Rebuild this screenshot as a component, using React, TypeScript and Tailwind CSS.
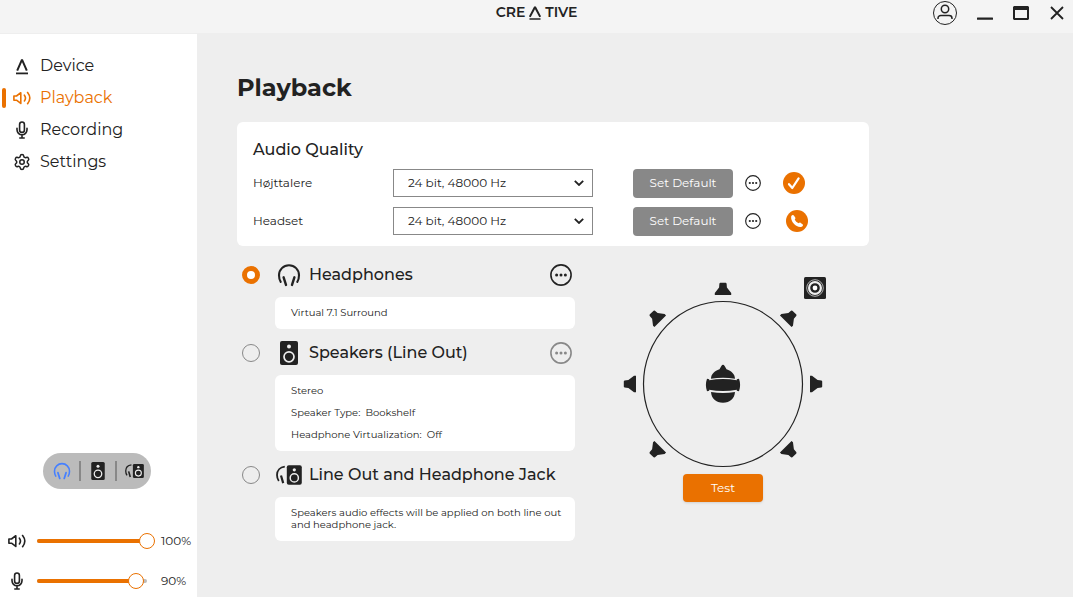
import React, { useState } from 'react';
import { Settings } from 'lucide-react';

type IconProps = { className?: string };

const DeviceIcon: React.FC<IconProps> = ({ className }) => (
  <svg viewBox="0 0 18 18" className={className} fill="none" stroke="currentColor" aria-hidden="true">
    <path d="M4.2 13.6 9 2.6l4.8 11" strokeWidth="2" strokeLinejoin="bevel" />
    <path d="M3 16.4h12" strokeWidth="1.8" />
  </svg>
);

const VolumeIcon: React.FC<IconProps> = ({ className }) => (
  <svg viewBox="0 0 18 18" className={className} fill="none" stroke="currentColor" strokeWidth="1.6" strokeLinejoin="round" strokeLinecap="round" aria-hidden="true">
    <path d="M.9 7v4.2h2.6l4.3 3.2V3.7L3.5 7z" />
    <path d="M11.4 6.2c1.3 1.7 1.3 4 0 5.7M14.6 3.5c2.7 3.4 2.7 7.8 0 11.2" />
  </svg>
);

const MicIcon: React.FC<IconProps> = ({ className }) => (
  <svg viewBox="0 0 18 18" className={className} fill="none" stroke="currentColor" strokeWidth="1.6" strokeLinecap="round" aria-hidden="true">
    <rect x="6.6" y="1" width="4.8" height="10.4" rx="2.4" />
    <path d="M4 7.2v1.6a5 5 0 0 0 10 0V7.2M9 14v2.8M6.8 17h4.4" />
  </svg>
);

const HeadphonesIcon: React.FC<IconProps> = ({ className }) => (
  <svg viewBox="0 0 24 24" className={className} fill="none" stroke="currentColor" strokeWidth="2.1" strokeLinecap="round" aria-hidden="true">
    <path d="M3.7 18.8C2.5 17 2 15 2 12.2a10 10 0 0 1 20 0c0 2.8-.5 4.8-1.7 6.6" />
    <path d="m6.6 14.3 2.4 7.6M17.4 14.3 15 21.9" strokeWidth="2.4" />
  </svg>
);

const SpeakerIcon: React.FC<IconProps> = ({ className }) => (
  <svg viewBox="0 0 18 24" className={className} aria-hidden="true">
    <rect width="18" height="24" rx="2" fill="#222" />
    <circle cx="9" cy="5.6" r="2" fill="#eee" />
    <circle cx="9" cy="15.8" r="5" fill="none" stroke="#eee" strokeWidth="1.7" />
  </svg>
);

const ComboIcon: React.FC<IconProps> = ({ className }) => (
  <svg viewBox="0 0 26 20" className={className} aria-hidden="true">
    <path d="M8.8 1.6C4 2.2 1 5.7 1 10c0 2.3.6 4.3 1.8 6" fill="none" stroke="#222" strokeWidth="1.8" />
    <path d="m5 10.5 2.2 7.6" fill="none" stroke="#222" strokeWidth="2.2" />
    <rect x="10.8" y=".3" width="15" height="19.4" rx="2" fill="#222" />
    <circle cx="18.3" cy="4.8" r="1.6" fill="#eee" />
    <circle cx="18.3" cy="12.9" r="4.1" fill="none" stroke="#eee" strokeWidth="1.5" />
  </svg>
);

const MoreIcon: React.FC<IconProps> = ({ className }) => (
  <svg viewBox="0 0 22 22" className={className} fill="currentColor" aria-hidden="true">
    <circle cx="11" cy="11" r="10.1" fill="none" stroke="currentColor" strokeWidth="1.6" />
    <circle cx="6.6" cy="11" r="1.5" />
    <circle cx="11" cy="11" r="1.5" />
    <circle cx="15.4" cy="11" r="1.5" />
  </svg>
);

const CheckBadge: React.FC = () => (
  <svg viewBox="0 0 22 22" className="ml-[22px] size-[22px]" role="img" aria-label="Default device">
    <circle cx="11" cy="11" r="11" fill="#ea7100" />
    <path d="m6 12.2 3.3 3.8 6.3-9.6" fill="none" stroke="#fff" strokeWidth="2.2" strokeLinecap="round" strokeLinejoin="round" />
  </svg>
);

const PhoneBadge: React.FC = () => (
  <svg viewBox="0 0 22 22" className="ml-[25px] size-[22px]" role="img" aria-label="Default communication device">
    <circle cx="11" cy="11" r="11" fill="#ea7100" />
    <path d="M5.2 6.2C6 4.8 7.2 4.6 7.9 5.5l1.3 1.9c.4.7.2 1.2-.5 1.9.6 1.7 2.2 3.3 4 4 .7-.7 1.3-.9 2-.4l1.8 1.3c.9.7.6 1.9-.8 2.6-4.8 1.4-11.5-5-10.5-10.6z" fill="#fff" />
  </svg>
);

const NAV_ITEMS = [
  { name: 'Device', icon: <DeviceIcon className="size-[18px]" /> },
  { name: 'Playback', icon: <VolumeIcon className="size-[18px]" /> },
  { name: 'Recording', icon: <MicIcon className="size-[18px]" /> },
  { name: 'Settings', icon: <Settings className="size-[18px]" strokeWidth={2} /> },
];

const QUALITY_ROWS = [
  { id: 'speakers', name: 'Højttalere', badge: <CheckBadge /> },
  { id: 'headset', name: 'Headset', badge: <PhoneBadge /> },
];

const OUTPUTS = [
  {
    id: 'headphones',
    name: 'Headphones',
    icon: <HeadphonesIcon className="size-6" />,
    more: 'text-[#222]',
    details: ['Virtual 7.1 Surround'],
  },
  {
    id: 'lineout',
    name: 'Speakers (Line Out)',
    icon: <SpeakerIcon className="h-6 w-[18px]" />,
    more: 'text-[#888]',
    details: ['Stereo', 'Speaker Type:\u00a0 Bookshelf', 'Headphone Virtualization:\u00a0 Off'],
  },
  {
    id: 'both',
    name: 'Line Out and Headphone Jack',
    icon: <ComboIcon className="h-5 w-[26px]" />,
    more: '',
    details: ['Speakers audio effects will be applied on both line out and headphone jack.'],
  },
];

const SURROUND = [
  { x: 104, y: 13, angle: 0 },
  { x: 171, y: 41, angle: 45 },
  { x: 197, y: 108, angle: 90 },
  { x: 171, y: 175, angle: 135 },
  { x: 37, y: 175, angle: -135 },
  { x: 11, y: 108, angle: -90 },
  { x: 37, y: 41, angle: -45 },
];

const TitleBar: React.FC = () => (
  <header className="grid h-[33px] grid-cols-3 items-start bg-[#f4f4f4]">
    <div />
    <div className="flex h-6 items-center justify-center gap-1 text-[14px] leading-none font-semibold">
      <span>CRE</span>
      <svg viewBox="0 0 12 16" className="h-4 w-3" fill="none" stroke="currentColor" role="img" aria-label="A">
        <path d="M.8 12.8 6 3l5.200 9.800" strokeWidth="2" strokeLinejoin="bevel" />
        <path d="M.5 15h11" strokeWidth="1.500" />
      </svg>
      <span>TIVE</span>
    </div>
    <div className="flex items-center justify-end gap-5 pt-px pr-2">
      <button aria-label="Account">
        <svg viewBox="0 0 24 24" className="size-6" fill="none" stroke="currentColor">
          <circle cx="12" cy="12" r="11.500" strokeWidth="1" />
          <circle cx="12" cy="8" r="3.700" strokeWidth="1.500" />
          <path d="M5 18v-.8c0-1.700 1.200-2.700 2.900-2.700h8.200c1.700 0 2.900 1 2.900 2.700v.8" strokeWidth="1.500" />
        </svg>
      </button>
      <button aria-label="Minimize">
        <svg viewBox="0 0 16 16" className="size-4">
          <rect y="12.500" width="16" height="2.200" rx=".5" fill="currentColor" />
        </svg>
      </button>
      <button aria-label="Maximize">
        <svg viewBox="0 0 16 16" className="size-4">
          <path fillRule="evenodd" d="M1 1h14l1 1v12l-1 1H1l-1-1V2zM2 5v8h12V5z" fill="currentColor" />
        </svg>
      </button>
      <button aria-label="Close">
        <svg viewBox="0 0 16 16" className="size-4" fill="none" stroke="currentColor" strokeWidth="1.800">
          <path d="m2 2 12 12M14 2 2 14" />
        </svg>
      </button>
    </div>
  </header>
);

type VolumeSliderProps = { label: string; icon: React.ReactNode; initial: number };

const VolumeSlider: React.FC<VolumeSliderProps> = ({ label, icon, initial }) => {
  const [value, setValue] = useState(initial);
  return (
    <div className="flex h-8 items-center pl-2">
      {icon}
      <div className="relative ml-[11px] h-1 w-[110px] rounded-full bg-[#bbb]">
        <div className="h-1 rounded-full bg-[#ea7100]" style={{ width: `${value}%` }} />
        <input
          type="range"
          aria-label={label}
          value={value}
          onChange={(e) => setValue(Number(e.target.value))}
          className="absolute -top-1.5 -left-2 h-4 w-[126px] appearance-none bg-transparent [&::-webkit-slider-thumb]:size-4 [&::-webkit-slider-thumb]:appearance-none [&::-webkit-slider-thumb]:rounded-full [&::-webkit-slider-thumb]:border [&::-webkit-slider-thumb]:border-[#ea7100] [&::-webkit-slider-thumb]:bg-white"
        />
      </div>
      <span className="ml-[14px] text-[12px]">{value}%</span>
    </div>
  );
};

const Sidebar: React.FC = () => (
  <aside className="flex w-[197px] shrink-0 flex-col justify-between bg-white pt-4">
    <nav>
      {NAV_ITEMS.map((item) => {
        const active = item.name === 'Playback';
        return (
          <a
            key={item.name}
            href={`#${item.name.toLowerCase()}`}
            className={`flex h-8 items-center pl-0.5 text-[16px] ${active ? 'text-[#ea7100]' : ''}`}
          >
            <span className={`mr-[7px] h-5 w-1 rounded-full ${active ? 'bg-[#ea7100]' : ''}`} />
            {item.icon}
            <span className="ml-[9px]">{item.name}</span>
          </a>
        );
      })}
    </nav>
    <div>
      <div className="mb-9 ml-[43px] flex h-9 w-[108px] items-center divide-x-2 divide-[#888] rounded-full bg-[#bbb]">
        <button aria-label="Use headphones" className="flex h-5 flex-1 items-center justify-center pl-0.5 text-[#4680ff]">
          <HeadphonesIcon className="size-[18px]" />
        </button>
        <button aria-label="Use speakers" className="flex h-5 flex-1 items-center justify-center">
          <SpeakerIcon className="h-[18px] w-[14px]" />
        </button>
        <button aria-label="Use both outputs" className="flex h-5 flex-1 items-center justify-center">
          <ComboIcon className="h-4 w-[19px]" />
        </button>
      </div>
      <div className="flex flex-col gap-2">
        <VolumeSlider label="Playback volume" icon={<VolumeIcon className="size-[18px]" />} initial={100} />
        <VolumeSlider label="Microphone volume" icon={<MicIcon className="size-[18px]" />} initial={90} />
      </div>
    </div>
  </aside>
);

const AudioQuality: React.FC = () => (
  <section className="max-w-[632px] rounded-md bg-white px-4 pt-4 pb-[11px]">
    <h2 className="mb-[7px] text-[16px] leading-6 font-medium">Audio Quality</h2>
    <div className="flex flex-col gap-[10px]">
      {QUALITY_ROWS.map((row) => (
        <div key={row.id} className="flex h-7 items-center text-[12px]">
          <label htmlFor={row.id} className="w-[140px]">{row.name}</label>
          <div className="relative w-[200px]">
            <select id={row.id} className="h-7 w-full appearance-none border border-[#888] bg-white pl-[14px]">
              <option>24 bit, 48000 Hz</option>
              <option>16 bit, 48000 Hz</option>
            </select>
            <svg viewBox="0 0 10 6" className="pointer-events-none absolute top-[11px] right-[9px] h-1.5 w-[10px]" fill="none" stroke="currentColor" strokeWidth="1.800">
              <path d="m.8.8 4.200 4.200L9.200.8" />
            </svg>
          </div>
          <button className="ml-10 h-[29px] w-[100px] rounded bg-[#888] text-white">Set Default</button>
          <button aria-label={`More options for ${row.name}`} className="ml-3">
            <MoreIcon className="size-4" />
          </button>
          {row.badge}
        </div>
      ))}
    </div>
  </section>
);

const OutputList: React.FC = () => {
  const [selected, setSelected] = useState('headphones');
  return (
    <div className="flex w-[338px] flex-col gap-0.5">
      {OUTPUTS.map((output) => (
        <section key={output.id}>
          <div className="flex h-11 items-center pr-[3px] pl-[5px]">
            <input
              type="radio"
              id={output.id}
              name="output"
              checked={selected === output.id}
              onChange={() => setSelected(output.id)}
              className="size-[18px] appearance-none rounded-full border border-[#888] checked:border-[5px] checked:border-[#ea7100] checked:bg-white"
            />
            <label htmlFor={output.id} className="ml-[15px] flex flex-1 items-center text-[16px] font-medium">
              <span className="mr-[6px] flex w-7 justify-center">{output.icon}</span>
              {output.name}
            </label>
            {output.more && (
              <button aria-label={`More options for ${output.name}`} className={output.more}>
                <MoreIcon className="size-[22px]" />
              </button>
            )}
          </div>
          <div className="ml-[38px] flex flex-col gap-[10px] rounded-md bg-white py-[10px] pr-3 pl-4 text-[10px] leading-3">
            {output.details.map((line) => (
              <p key={line}>{line}</p>
            ))}
          </div>
        </section>
      ))}
    </div>
  );
};

const SurroundTest: React.FC = () => (
  <div className="ml-11 flex flex-col items-center pt-[23px]">
    <svg viewBox="0 0 208 192" className="h-48 w-52" fill="#222" role="img" aria-label="Surround speaker layout">
      <ellipse cx="104" cy="108" rx="79.500" ry="82.500" fill="none" stroke="#222" strokeWidth="1.200" />
      {SURROUND.map((s) => (
        <path
          key={`${s.x}-${s.y}`}
          transform={`translate(${s.x} ${s.y}) rotate(${s.angle})`}
          d="M-2.800-6.200h5.600l.8.700.3 3.900L8.200 4v2H-8.200V4l4.300-5.600.3-3.900z"
        />
      ))}
      <g transform="translate(104 108)">
        <path d="M-12-5.200C-12-10-8.500-13-3.500-14.800L-1.800-17.800Q0-20.500 1.800-17.800L3.500-14.800C8.500-13 12-10 12-5.200Q0-7.200-12-5.200z" />
        <path d="M-16-5.200l2.200.4v1Q0-6.200 13.800-3.800v-1L16-5.200Q18.200 1 16 7.200L13.800 6.800v-1Q0 8.400-13.800 5.800v1L-16 7.200Q-18.200 1-16-5.200z" />
        <path d="M-12 8Q0 10 12 8C11.600 14.500 7 18.800 0 18.800S-11.600 14.500-12 8z" />
      </g>
      <rect x="185" y="1" width="22" height="22" rx="1.500" />
      <g transform="translate(196 12)" fill="none" stroke="#eee">
        <circle r="8.300" strokeWidth=".700" />
        <circle r="5.900" strokeWidth="2.200" />
        <circle r="2.400" fill="#fff" stroke="none" />
      </g>
    </svg>
    <button className="mt-[6px] h-7 w-20 rounded bg-[#ea7100] text-[12px] text-white shadow">Test</button>
  </div>
);

const App: React.FC = () => {
  return (
    <div className="flex min-h-screen flex-col bg-[#eee] font-[Montserrat,Inter,sans-serif] text-[#222]">
      <TitleBar />
      <div className="mt-px flex flex-1">
        <Sidebar />
        <main className="flex-1 px-10 pt-[38px]">
          <h1 className="mb-[18px] text-[24px] leading-8 font-bold">Playback</h1>
          <AudioQuality />
          <div className="mt-[7px] flex items-start">
            <OutputList />
            <SurroundTest />
          </div>
        </main>
      </div>
    </div>
  );
};

export default App;
